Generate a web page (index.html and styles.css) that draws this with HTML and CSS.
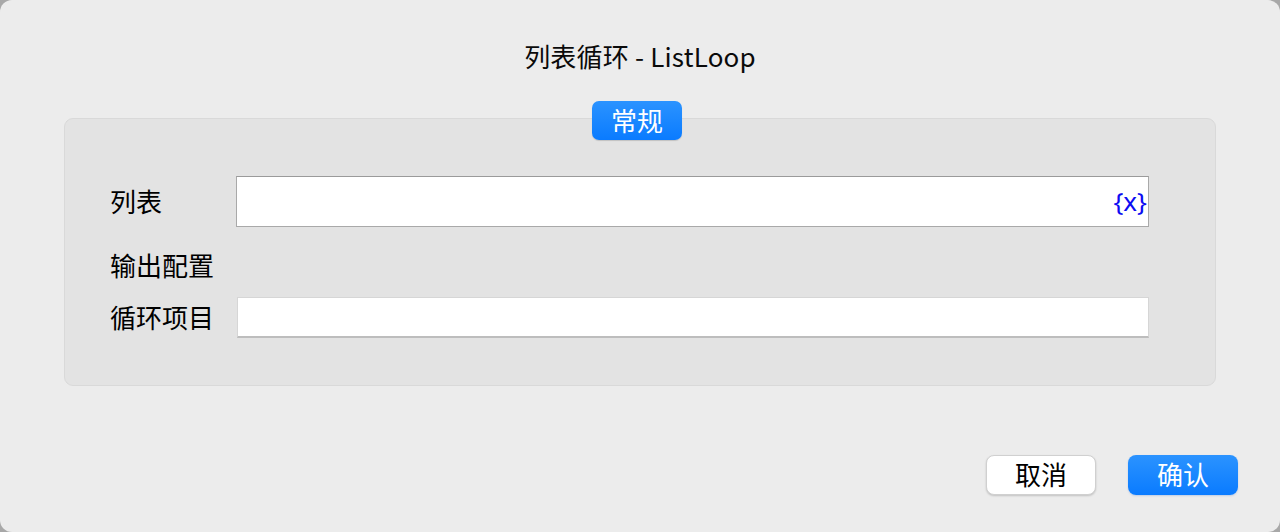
FILE: index.html
```html
<!DOCTYPE html>
<html lang="zh">
<head>
<meta charset="utf-8">
<title>列表循环 - ListLoop</title>
<link rel="stylesheet" href="styles.css">
</head>
<body>
<div class="window">
  <h1 class="title">列表循环 - ListLoop</h1>
  <div class="group-wrap">
    <div class="tab">常规</div>
    <div class="group">
      <div class="row">
        <label class="label">列表</label>
        <div class="field field-var"><span class="var">{x}</span></div>
      </div>
      <div class="row section">
        <span class="label">输出配置</span>
      </div>
      <div class="row">
        <label class="label">循环项目</label>
        <div class="field field-plain"></div>
      </div>
    </div>
  </div>
  <div class="actions">
    <button class="btn btn-cancel">取消</button>
    <button class="btn btn-ok">确认</button>
  </div>
</div>
</body>
</html>
```
FILE: styles.css
```css
html, body {
  margin: 0;
  padding: 0;
  width: 1280px;
  height: 532px;
  background: #a8a8a8;
  overflow: hidden;
}
.window {
  box-sizing: border-box;
  width: 1280px;
  height: 532px;
  background: #ececec;
  border-radius: 12px;
  font-family: "PingFang SC", "Noto Sans CJK SC", "Liberation Sans", sans-serif;
  color: #000;
  display: flex;
  flex-direction: column;
  padding: 0 42px 0 64px;
}
.title {
  margin: 0;
  padding-top: 39px;
  height: 61px;
  box-sizing: border-box;
  font-size: 26px;
  font-weight: 400;
  line-height: 34px;
  text-align: center;
  width: 1280px;
  margin-left: -64px;
  color: #0a0a0a;
  letter-spacing: 0.2px;
}
.group-wrap {
  position: relative;
  width: 1152px;
  margin-top: 57px;
}
.tab {
  position: absolute;
  left: 528px;
  top: -17px;
  width: 90px;
  height: 39px;
  border-radius: 7px;
  background: linear-gradient(#2b93ff, #0a7bff);
  color: #fff;
  font-size: 26px;
  line-height: 38px;
  text-align: center;
  box-shadow: 0 1px 1px rgba(0,0,0,0.15);
}
.group {
  box-sizing: border-box;
  height: 268px;
  background: #e3e3e3;
  border: 1px solid #d9d9d9;
  border-radius: 9px;
  padding: 57px 66px 0 45px;
  display: flex;
  flex-direction: column;
}
.row {
  display: flex;
  align-items: center;
}
.label {
  width: 126px;
  font-size: 26px;
  line-height: 30px;
  flex: none;
  margin-top: -2px;
}
.section {
  height: 30px;
  margin-top: 24px;
  margin-bottom: 16px;
}
.field {
  box-sizing: border-box;
  flex: 1;
  background: #fff;
}
.field-var {
  height: 51px;
  border: 1px solid #a9a9a9;
  border-top-color: #9a9a9a;
  display: flex;
  align-items: center;
  justify-content: flex-end;
  padding-right: 1px;
}
.var {
  color: #0c0cf2;
  font-family: "Noto Sans", "Liberation Sans", sans-serif;
  font-size: 26px;
  line-height: 30px;
  margin-top: -2px;
}
.field-plain {
  height: 41px;
  margin-left: 1px;
  border: 1px solid #d6d6d6;
  border-bottom: 2px solid #bdbdbd;
}
.actions {
  display: flex;
  justify-content: flex-end;
  gap: 32px;
  margin-top: 69px;
  width: 1174px;
}
.btn {
  width: 110px;
  height: 40px;
  border-radius: 8px;
  font-family: "PingFang SC", "Noto Sans CJK SC", sans-serif;
  font-size: 26px;
  line-height: 36px;
  padding: 0 0 2px;
  cursor: pointer;
}
.btn-cancel {
  background: #fff;
  color: #000;
  border: 1px solid #d0d0d0;
  box-shadow: 0 1px 2px rgba(0,0,0,0.18);
}
.btn-ok {
  background: linear-gradient(#2b93ff, #0a7bff);
  color: #fff;
  border: none;
  box-shadow: 0 1px 2px rgba(0,80,200,0.2);
}
```
